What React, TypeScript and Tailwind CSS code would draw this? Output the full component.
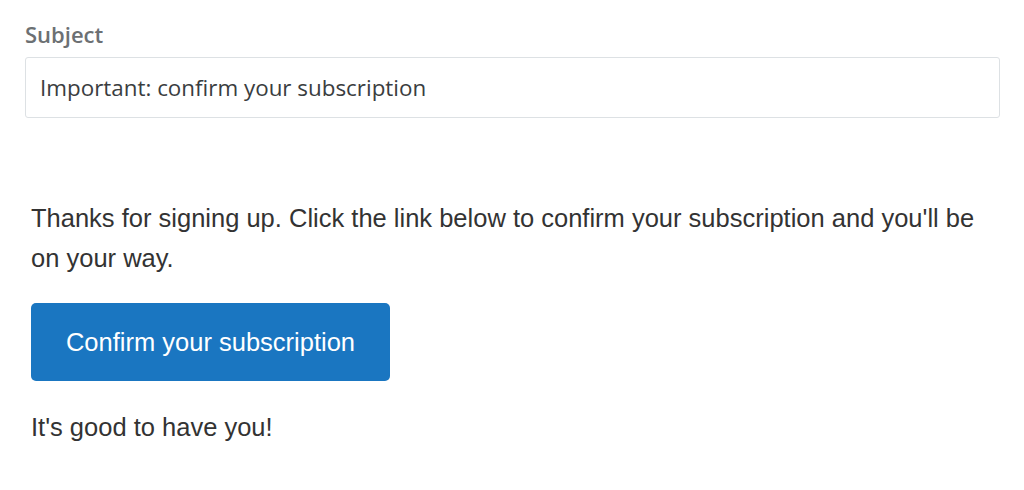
export default function App() {
  return (
    <div className="w-[1024px] h-[490px] bg-white overflow-hidden">
      <div className="pl-[25px] pr-[24px] pt-[20px]">
        <div className="text-[22px] leading-[28px] font-semibold text-[#6c7073]" style={{ fontFamily: '"Open Sans", sans-serif' }}>
          Subject
        </div>
        <div className="mt-[9px] h-[61px] border border-[#dde1e4] rounded-[3px] flex items-center pl-[14px] text-[22.4px] text-[#3a3d40]" style={{ fontFamily: '"Open Sans", sans-serif' }}>
          Important: confirm your subscription
        </div>
      </div>
      <div className="pl-[31px] pr-[30px] pt-[80px]" style={{ fontFamily: '"Liberation Sans", Arial, sans-serif' }}>
        <p className="text-[25.5px] leading-[40px] text-[#333333]">
          Thanks for signing up. Click the link below to confirm your subscription and you'll be on your way.
        </p>
        <div className="mt-[25px] w-[359px] h-[78px] bg-[#1a76c1] rounded-[5px] flex items-center justify-center text-white text-[25.5px]">
          Confirm your subscription
        </div>
        <p className="mt-[26px] text-[25.5px] leading-[40px] text-[#333333]">It's good to have you!</p>
      </div>
    </div>
  );
}
